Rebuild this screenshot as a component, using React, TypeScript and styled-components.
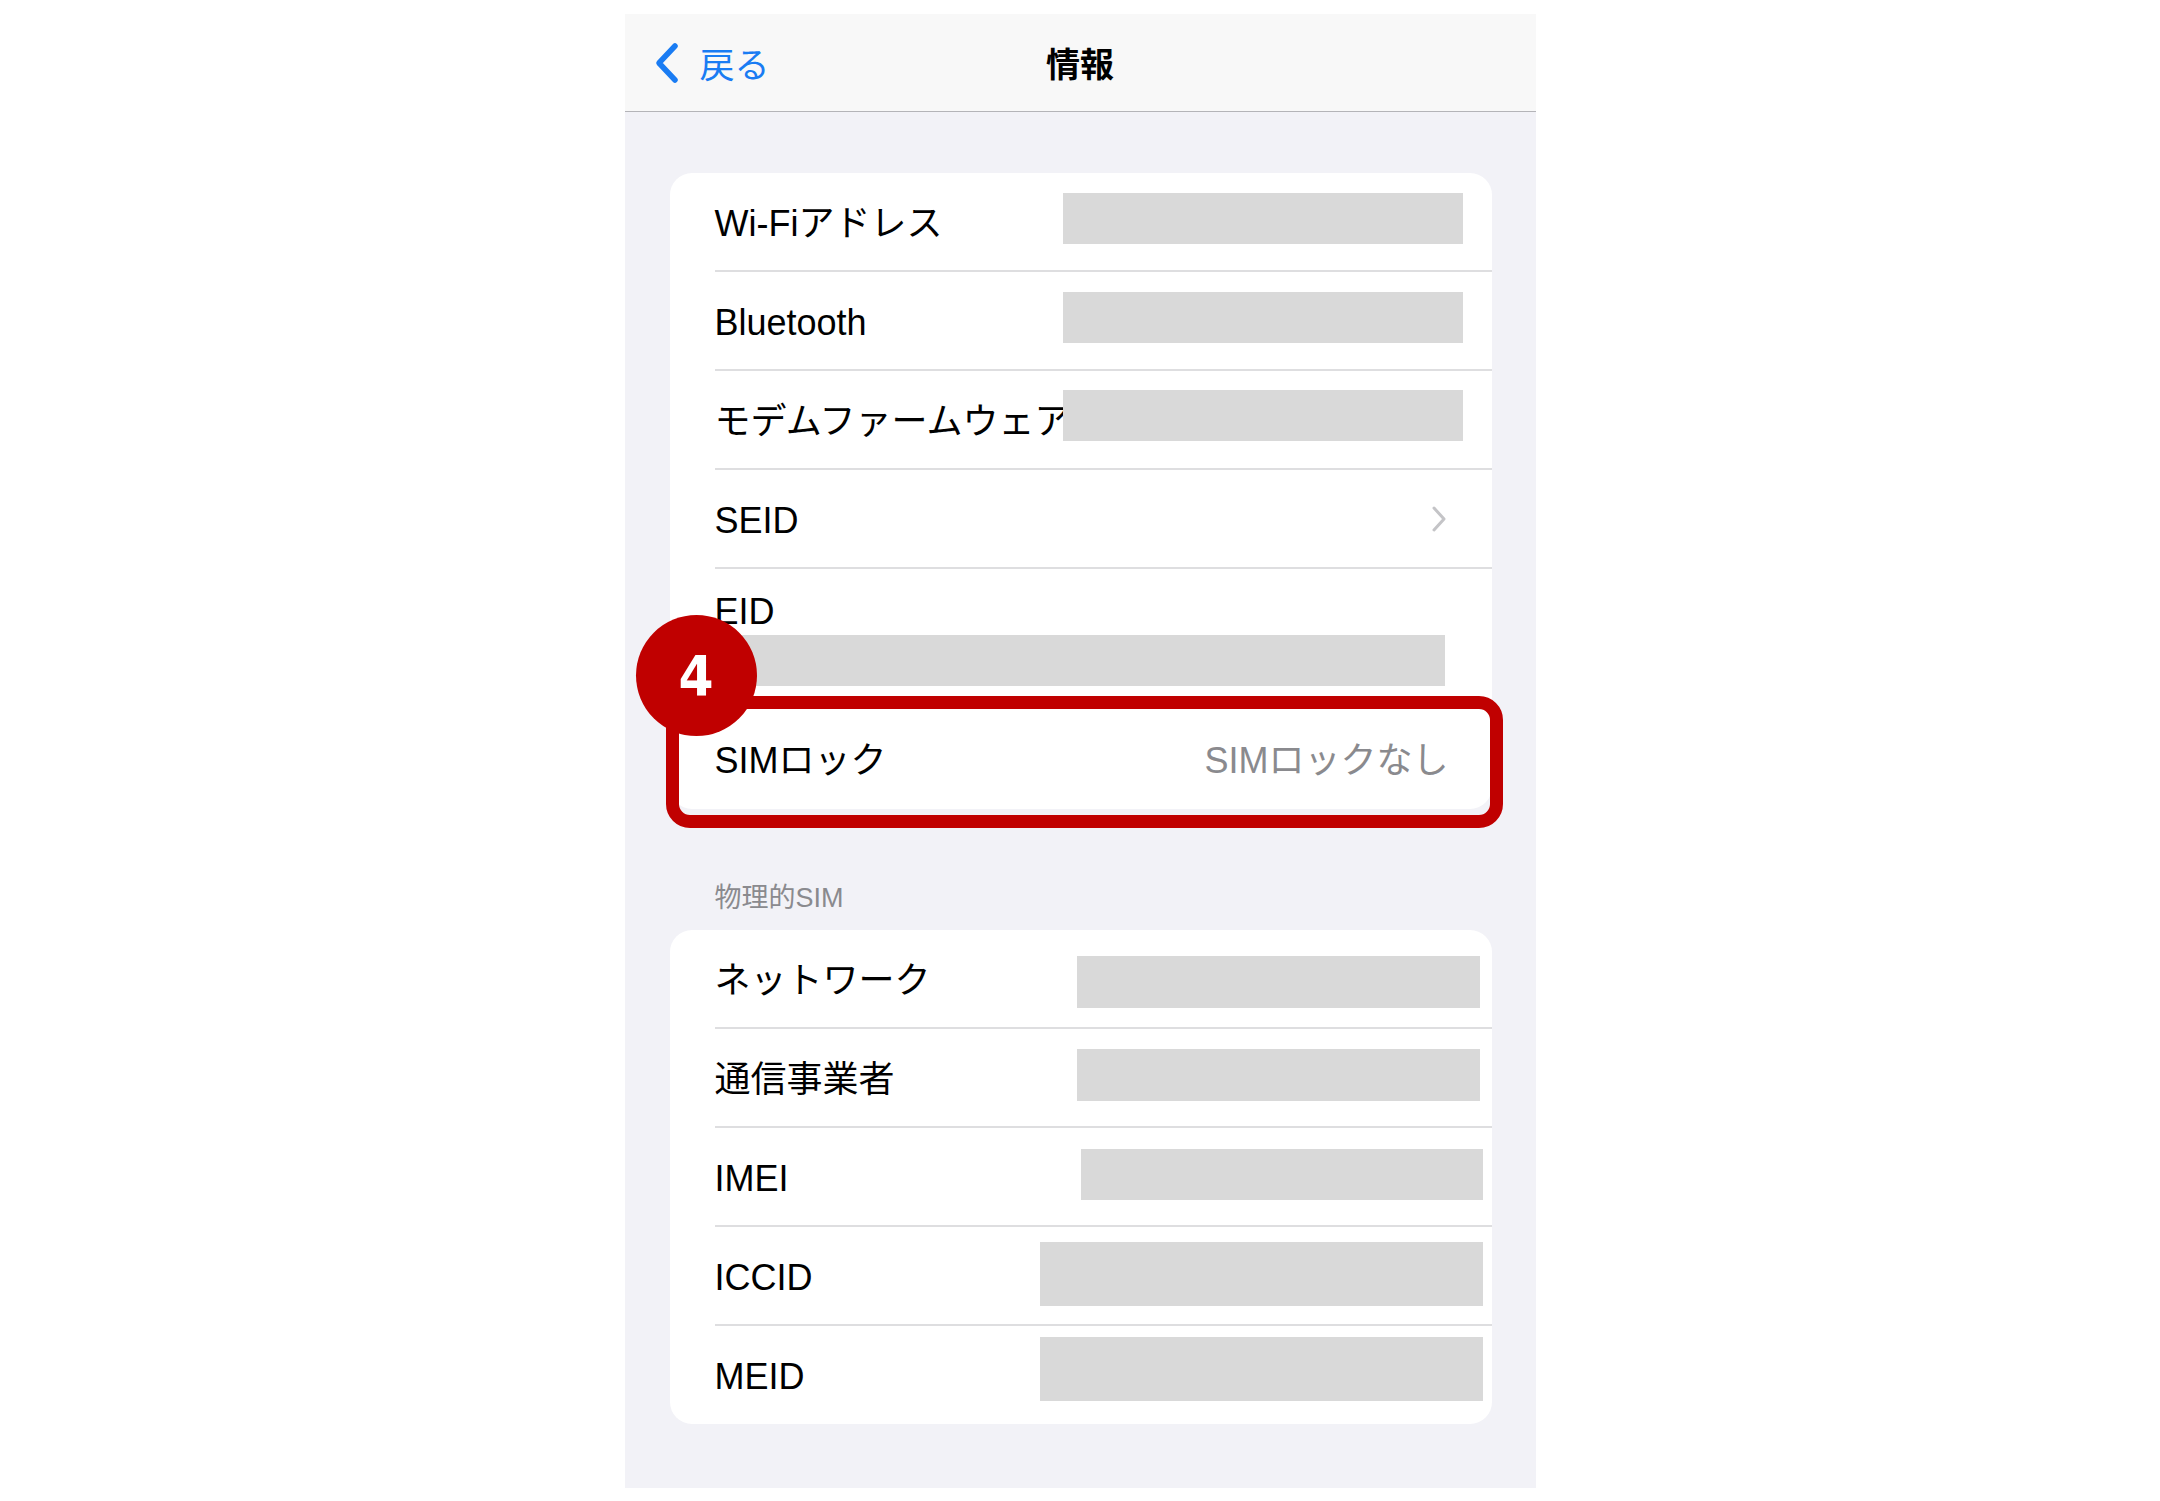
import React from "react";
import styled, { createGlobalStyle } from "styled-components";

const Global = createGlobalStyle`
  html, body { margin: 0; padding: 0; background: #ffffff; }
  body { font-family: "Liberation Sans", "Noto Sans CJK JP", sans-serif; }
`;

const Page = styled.div`
  width: 2160px;
  height: 1501px;
  display: flex;
  justify-content: center;
  padding-top: 14px;
  box-sizing: border-box;
`;

const Phone = styled.div`
  width: 911px;
  height: 1474px;
  background: #f2f2f7;
  display: flex;
  flex-direction: column;
  font-family: "Liberation Sans", "Noto Sans CJK JP", sans-serif;
`;

const NavBar = styled.div`
  height: 97px;
  flex: none;
  background: #f8f8f8;
  border-bottom: 1.5px solid #b4b4b8;
  display: grid;
  grid-template-columns: 1fr auto 1fr;
  align-items: center;
  padding: 0 28px;
`;

const Back = styled.div`
  display: flex;
  align-items: center;
  gap: 20px;
  color: #1a7cf3;
  font-size: 35px;
  font-family: "Noto Sans CJK JP", sans-serif;
`;

const Title = styled.div`
  font-family: "Noto Sans CJK JP", sans-serif;
  font-weight: 700;
  font-size: 34px;
  color: #000;
`;

const Content = styled.div`
  padding: 61px 44px 0 45px;
  display: flex;
  flex-direction: column;
`;

const Card = styled.div`
  background: #ffffff;
  border-radius: 22px;
  display: flex;
  flex-direction: column;
`;

const Row = styled.div<{ $overlay?: boolean }>`
  padding-left: 45px;
  position: ${(p) => (p.$overlay ? "relative" : "static")};
`;

const RowInner = styled.div<{ $last?: boolean; $h?: number }>`
  height: ${(p) => p.$h ?? 97}px;
  display: flex;
  align-items: center;
  justify-content: space-between;
  border-bottom: ${(p) => (p.$last ? "none" : "2px solid #dedee0")};
`;

const StackInner = styled.div`
  display: flex;
  flex-direction: column;
  padding: 19px 0 21px;
  gap: 3px;
  border-bottom: 2px solid #dedee0;
`;

const Label = styled.span`
  font-size: 36px;
  line-height: 40px;
  padding-top: 4px;
  color: #000;
  white-space: nowrap;
  min-width: 0;
  flex: 0 1 auto;
`;

const Value = styled.span`
  font-size: 36px;
  line-height: 40px;
  padding-top: 4px;
  color: #8a8a8e;
  margin-right: 43px;
  white-space: nowrap;
`;

const Redacted = styled.div<{ $w: number; $h: number; $mr: number; $dy?: number }>`
  width: ${(p) => p.$w}px;
  height: ${(p) => p.$h}px;
  margin-right: ${(p) => p.$mr}px;
  transform: translateY(${(p) => p.$dy ?? 0}px);
  background: #d9d9d9;
  flex: none;
`;

const WideRedacted = styled.div`
  height: 51px;
  margin-right: 47px;
  background: #d9d9d9;
`;

const ChevronWrap = styled.div`
  margin-right: 45px;
  display: flex;
  align-items: center;
`;

const SectionHeader = styled.div`
  font-family: "Liberation Sans", "Noto Sans CJK JP", sans-serif;
  font-size: 27px;
  line-height: 30px;
  color: #8a8a8e;
  padding-left: 45px;
  margin: 74px 0 17px;
`;

const Highlight = styled.div`
  position: absolute;
  left: -4px;
  right: -11px;
  top: -13px;
  bottom: -19px;
  border: 13px solid #c00000;
  border-radius: 24px;
  pointer-events: none;
`;

const Badge = styled.div`
  position: absolute;
  left: -34px;
  top: -94px;
  width: 121px;
  height: 121px;
  border-radius: 50%;
  background: #c00000;
  color: #ffffff;
  display: flex;
  align-items: center;
  justify-content: center;
  font-family: "DejaVu Sans Condensed", "DejaVu Sans", sans-serif;
  font-stretch: condensed;
  font-weight: 700;
  font-size: 56px;
  z-index: 2;
`;

const BackChevron = () => (
  <svg width="27" height="42" viewBox="0 0 27 42">
    <polyline points="22,4 6,21 22,38" fill="none" stroke="#1a7cf3" strokeWidth="5.5" strokeLinecap="round" strokeLinejoin="round" />
  </svg>
);

const RowChevron = () => (
  <svg width="16" height="28" viewBox="0 0 16 28">
    <polyline points="3,3 13,14 3,25" fill="none" stroke="#c4c4c7" strokeWidth="3" strokeLinecap="round" strokeLinejoin="round" />
  </svg>
);

type Simple = { label: string; w: number; h: number; mr: number; dy?: number };

const card2: Simple[] = [
  { label: "ネットワーク", w: 403, h: 52, mr: 12, dy: 3 },
  { label: "通信事業者", w: 403, h: 52, mr: 12, dy: -3 },
  { label: "IMEI", w: 402, h: 51, mr: 9, dy: -2 },
  { label: "ICCID", w: 443, h: 64, mr: 9, dy: -2 },
  { label: "MEID", w: 443, h: 64, mr: 9, dy: -6 },
];

export default function App() {
  return (
    <>
      <Global />
      <Page>
        <Phone>
          <NavBar>
            <Back>
              <BackChevron />
              <span>戻る</span>
            </Back>
            <Title>情報</Title>
            <div />
          </NavBar>
          <Content>
            <Card>
              <Row>
                <RowInner>
                  <Label>Wi-Fiアドレス</Label>
                  <Redacted $w={400} $h={51} $mr={29} $dy={-3} />
                </RowInner>
              </Row>
              <Row>
                <RowInner>
                  <Label>Bluetooth</Label>
                  <Redacted $w={400} $h={51} $mr={29} $dy={-3} />
                </RowInner>
              </Row>
              <Row>
                <RowInner>
                  <Label>モデムファームウェア</Label>
                  <Redacted $w={400} $h={51} $mr={29} $dy={-4} />
                </RowInner>
              </Row>
              <Row>
                <RowInner>
                  <Label>SEID</Label>
                  <ChevronWrap>
                    <RowChevron />
                  </ChevronWrap>
                </RowInner>
              </Row>
              <Row>
                <StackInner>
                  <Label>EID</Label>
                  <WideRedacted />
                </StackInner>
              </Row>
              <Row $overlay>
                <RowInner $last $h={100}>
                  <Label>SIMロック</Label>
                  <Value>SIMロックなし</Value>
                </RowInner>
                <Highlight />
                <Badge>4</Badge>
              </Row>
            </Card>
            <SectionHeader>物理的SIM</SectionHeader>
            <Card>
              {card2.map((r, i) => (
                <Row key={r.label}>
                  <RowInner $last={i === card2.length - 1} $h={i === card2.length - 1 ? 98 : 97}>
                    <Label>{r.label}</Label>
                    <Redacted $w={r.w} $h={r.h} $mr={r.mr} $dy={r.dy} />
                  </RowInner>
                </Row>
              ))}
            </Card>
          </Content>
        </Phone>
      </Page>
    </>
  );
}
